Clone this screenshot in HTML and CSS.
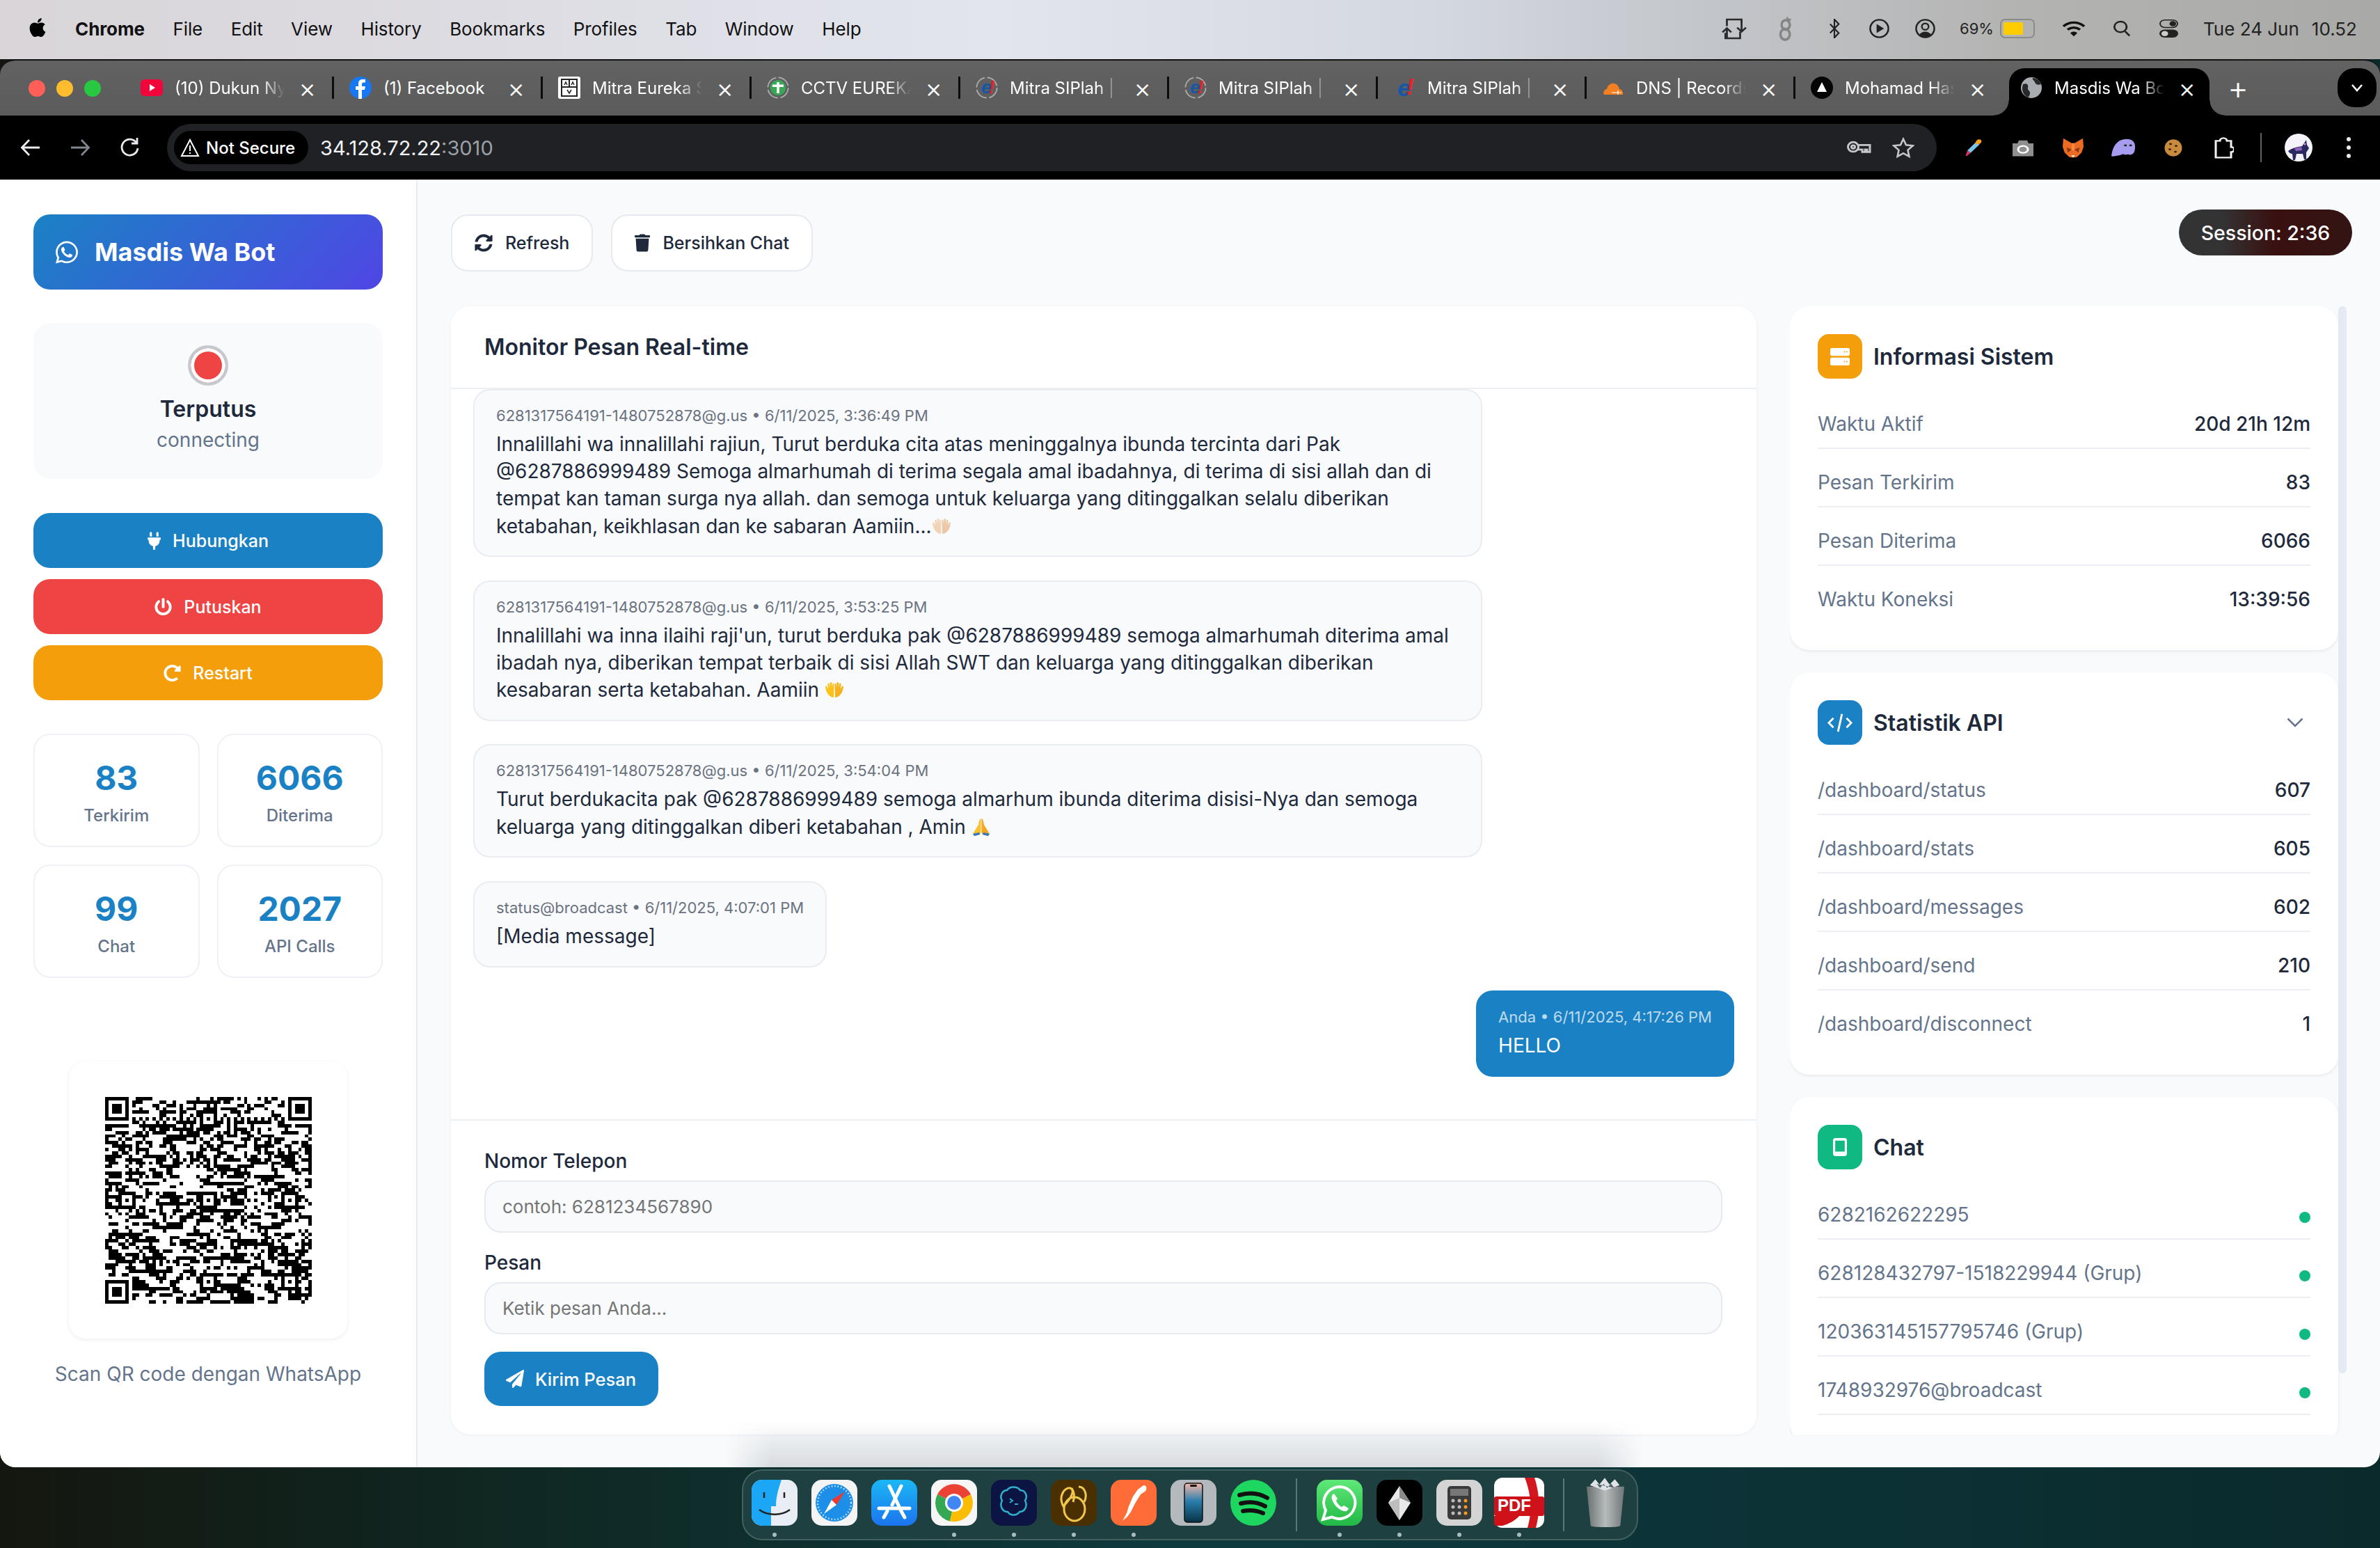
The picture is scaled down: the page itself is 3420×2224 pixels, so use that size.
FILE: index.html
```html
<!DOCTYPE html>
<html lang="id">
<head>
<meta charset="utf-8">
<title>Masdis Wa Bot</title>
<link rel="stylesheet" href="styles.css">
</head>
<body>
<div class="screen">
  <header class="menubar">
    <svg class="apple" viewBox="0 0 384 512"><path d="M318.7 268.7c-.2-36.7 16.4-64.4 50-84.8-18.8-26.9-47.2-41.7-84.7-44.6-35.5-2.8-74.3 20.7-88.5 20.7-15 0-49.4-19.7-76.4-19.7C63.3 141.2 4 184.8 4 273.5q0 39.3 14.4 81.2c12.8 36.7 59 126.7 107.2 125.2 25.2-.6 43-17.9 75.8-17.9 31.8 0 48.3 17.9 76.4 17.9 48.6-.7 90.4-82.5 102.6-119.3-65.2-30.7-61.7-90-61.7-91.9zm-56.6-164.2c27.3-32.4 24.8-61.9 24-72.5-24.1 1.4-52 16.4-67.9 34.9-17.5 19.8-27.8 44.3-25.6 71.9 26.1 2 49.9-11.4 69.5-34.3z"/></svg>
    <nav class="menus">
      <span class="menu-app">Chrome</span><span>File</span><span>Edit</span><span>View</span><span>History</span><span>Bookmarks</span><span>Profiles</span><span>Tab</span><span>Window</span><span>Help</span>
    </nav>
    <div class="status">
      <svg class="st-ic" width="38" height="33" viewBox="0 0 36 34" preserveAspectRatio="none" fill="none" stroke="#2b2b2b" stroke-width="2.6"><path d="M9 13V3h20v6M27 21v10H7v-8"/><path d="M9 31V17M3 22l6-6 6 6M29 4v16M23 15l6 6 6-6"/></svg>
      <svg class="st-ic" width="22" height="37" viewBox="0 0 26 38" preserveAspectRatio="none" fill="none" stroke="#858585" stroke-width="4"><circle cx="12" cy="27" r="8"/><circle cx="13" cy="13" r="7"/><path d="M15 2l3 4 4-1" stroke-width="3"/></svg>
      <svg class="st-ic" width="16" height="28" viewBox="0 0 18 30" preserveAspectRatio="none" fill="none" stroke="#222" stroke-width="2.4"><path d="M2 8l14 14-7 7V1l7 7L2 22"/></svg>
      <svg class="st-ic" width="29" height="28" viewBox="0 0 30 30" preserveAspectRatio="none"><circle cx="15" cy="15" r="13.5" fill="none" stroke="#222" stroke-width="2.6"/><path d="M11 8l11 7-11 7z" fill="#222"/></svg>
      <svg class="st-ic" width="29" height="28" viewBox="0 0 30 30" preserveAspectRatio="none"><circle cx="15" cy="15" r="13.5" fill="none" stroke="#222" stroke-width="2.6"/><circle cx="15" cy="12" r="5" fill="none" stroke="#222" stroke-width="2.4"/><path d="M6 25c3-7 15-7 18 0l-9 4z" fill="#222"/></svg>
      <div class="battery-cell"><span class="pct">69%</span><span class="battery"><span class="battery-fill"></span></span></div>
      <svg class="st-ic" width="36" height="24" viewBox="0 0 36 30" preserveAspectRatio="none" fill="none" stroke="#111" stroke-width="4"><path d="M3 11c9-9 21-9 30 0M9 17c6-5 12-5 18 0"/><path d="M18 29l-5-6c3-3 7-3 10 0z" fill="#111" stroke="none"/></svg>
      <svg class="st-ic" width="26" height="24" viewBox="0 0 28 30" preserveAspectRatio="none" fill="none" stroke="#222" stroke-width="3"><circle cx="12" cy="12" r="9.5"/><path d="M19 20l7 8"/></svg>
      <svg class="st-ic" width="27" height="26" viewBox="0 0 28 34" preserveAspectRatio="none"><rect x="1" y="1" width="26" height="14" rx="7" fill="none" stroke="#222" stroke-width="2"/><circle cx="20" cy="8" r="5" fill="#222"/><rect x="0" y="19" width="28" height="15" rx="7.5" fill="#222"/><circle cx="8" cy="26.5" r="5" fill="#ccc"/></svg>
      <div class="clock">Tue 24 Jun<span class="clock-time">10.52</span></div>
    </div>
  </header>

  <div class="window">
    <div class="tabstrip">
      <div class="lights"><i class="light red"></i><i class="light amber"></i><i class="light green"></i></div>
      <div class="tab sep">
        <svg class="fav" viewBox="0 0 32 32"><rect y="4" width="32" height="24" rx="6" fill="#f2053b"/><path d="M13 11l8 5-8 5z" fill="#fff"/></svg>
        <span class="tab-title tab-fade">(10) Dukun Ny</span><span class="tab-x">×</span>
      </div>
      <div class="tab sep">
        <svg class="fav" viewBox="0 0 32 32"><circle cx="16" cy="16" r="16" fill="#1877f2"/><path d="M18 32V19h4l1-5h-5v-3c0-2 1-2.500 3-2.500h2V4h-4c-4 0-6 2.500-6 6v4H9v5h4v13z" fill="#fff"/></svg>
        <span class="tab-title">(1) Facebook</span><span class="tab-x">×</span>
      </div>
      <div class="tab sep">
        <svg class="fav" viewBox="0 0 32 32"><rect width="32" height="32" rx="3" fill="#fff"/><rect x="5" y="4" width="22" height="24" fill="none" stroke="#222" stroke-width="2"/><path d="M5 15h22M16 4v11" stroke="#222" stroke-width="2"/><path d="M9 12l2-4 2 4M19 12l2-4 2 4M13 19l3 5 3-5" fill="none" stroke="#222" stroke-width="1.500"/></svg>
        <span class="tab-title tab-fade">Mitra Eureka S</span><span class="tab-x">×</span>
      </div>
      <div class="tab sep">
        <svg class="fav" viewBox="0 0 36 36"><circle cx="18" cy="18" r="16.500" fill="none" stroke="#aaa" stroke-width="2" stroke-dasharray="22 4"/><circle cx="18" cy="18" r="12.500" fill="#3aa757"/><path d="M18 9v18M9 15h18" stroke="#fff" stroke-width="4"/></svg>
        <span class="tab-title tab-fade">CCTV EUREKA</span><span class="tab-x">×</span>
      </div>
      <div class="tab sep">
        <svg class="fav" viewBox="0 0 36 36"><circle cx="18" cy="18" r="16.500" fill="none" stroke="#aaa" stroke-width="2" stroke-dasharray="22 4"/><text x="9" y="27" class="fav-e">e</text><text x="21" y="27" class="fav-i">!</text></svg>
        <span class="tab-title tab-fade">Mitra SIPlah | S</span><span class="tab-x">×</span>
      </div>
      <div class="tab sep">
        <svg class="fav" viewBox="0 0 36 36"><circle cx="18" cy="18" r="16.500" fill="none" stroke="#aaa" stroke-width="2" stroke-dasharray="22 4"/><text x="9" y="27" class="fav-e">e</text><text x="21" y="27" class="fav-i">!</text></svg>
        <span class="tab-title tab-fade">Mitra SIPlah | S</span><span class="tab-x">×</span>
      </div>
      <div class="tab sep">
        <svg class="fav" viewBox="0 0 36 36"><text x="7" y="31" class="fav-e fav-big">e</text><text x="21" y="29" class="fav-i fav-big">!</text></svg>
        <span class="tab-title tab-fade">Mitra SIPlah | S</span><span class="tab-x">×</span>
      </div>
      <div class="tab sep">
        <svg class="fav" viewBox="0 0 32 32"><path d="M3 26c-2-4 1-8 4-8 1-6 6-9 11-8 4 1 6 4 7 8 3 0 6 4 5 8z" fill="#f38020"/><path d="M14 23h14M23 20v6" stroke="#fff" stroke-width="1.200"/></svg>
        <span class="tab-title tab-fade">DNS | Records</span><span class="tab-x">×</span>
      </div>
      <div class="tab">
        <svg class="fav" viewBox="0 0 32 32"><circle cx="16" cy="16" r="16" fill="#050505"/><path d="M16 8l7 14H9z" fill="#fff"/></svg>
        <span class="tab-title tab-fade">Mohamad Has</span><span class="tab-x">×</span>
      </div>
      <div class="tab tab-active">
        <svg class="fav" viewBox="0 0 32 32"><circle cx="16" cy="16" r="15" fill="#a9adb2"/><path d="M4 11c6-2 8 1 7 5s4 4 3 9c-1 3-2 4-3 5C5 27 1 20 4 11zM18 2c6 0 10 4 12 9-5 2-8 0-9-3s-4-3-3-6z" fill="#26282b"/></svg>
        <span class="tab-title tab-fade">Masdis Wa Bo</span><span class="tab-x">×</span>
      </div>
      <span class="newtab">+</span>
      <span class="tabmenu"><svg width="20" height="12" viewBox="0 0 20 12" fill="none" stroke="#fff" stroke-width="2.600"><path d="M3 2l7 8 7-8"/></svg></span>
    </div>

    <div class="toolbar">
      <span class="tool-btn"><svg width="30" height="26" viewBox="0 0 30 26" fill="none" stroke="#e8eaed" stroke-width="2.800"><path d="M28 13H3M13 2L2.500 13 13 24"/></svg></span>
      <span class="tool-btn"><svg width="30" height="26" viewBox="0 0 30 26" fill="none" stroke="#80868b" stroke-width="2.800"><path d="M2 13h25M17 2l10.500 11L17 24"/></svg></span>
      <span class="tool-btn"><svg width="28" height="30" viewBox="0 0 28 30" fill="none" stroke="#e8eaed" stroke-width="2.800"><path d="M24 8a11.500 11.500 0 1 0 2 8"/><path d="M25 1v8h-8" /></svg></span>
      <div class="omnibox">
        <span class="chip">
          <svg width="28" height="28" viewBox="0 0 28 28" fill="none" stroke="#fff" stroke-width="2"><path d="M14 3L2 26h24z"/><path d="M14 11v8M14 21v2"/></svg>
          Not Secure
        </span>
        <span class="url">34.128.72.22<span class="url-port">:3010</span></span>
        <span class="omni-end">
          <span class="omni-btn"><svg width="36" height="22" viewBox="0 0 36 24" preserveAspectRatio="none" fill="none" stroke="#c4c7ca" stroke-width="3"><circle cx="10" cy="11" r="7.500"/><circle cx="10" cy="11" r="2.500"/><path d="M17 8h17v11h-4v-4h-3v4h-4v-4h-6"/></svg></span>
          <span class="omni-btn"><svg width="32" height="31" viewBox="0 0 34 34" preserveAspectRatio="none" fill="none" stroke="#c4c7ca" stroke-width="2.800"><path d="M17 3l4.300 9.300 10.200 1.200-7.600 6.900 2 10.100L17 25.400 8.100 30.500l2-10.100-7.600-6.900 10.200-1.200z"/></svg></span>
        </span>
      </div>
      <div class="exts">
        <span class="ext"><svg width="26" height="26" viewBox="0 0 30 40" preserveAspectRatio="none"><path d="M6 26L20 8l6 5L11 32z" fill="#7cc4e8"/><path d="M6 26l5 6-6 7-2-1z" fill="#e02d6b"/><path d="M20 12c-2-4 1-8 4-10 4-1 6 2 5 6-1 3-4 6-9 4z" fill="#f5a11c"/></svg></span>
        <span class="ext"><svg width="30" height="27" viewBox="0 0 30 38" preserveAspectRatio="none"><path d="M0 10h7l2-6h12l2 6h7v26H0z" fill="#8f8f8f"/><circle cx="15" cy="22" r="7" fill="none" stroke="#fff" stroke-width="3"/></svg></span>
        <span class="ext"><svg width="30" height="29" viewBox="0 0 32 38" preserveAspectRatio="none"><path d="M1 1l13 9h4l13-9 1 16-3 11-7 8-3 1h-6l-3-1-7-8L0 17z" fill="#ec6a22"/><path d="M6 18l8 4-6 6zM26 18l-8 4 6 6z" fill="#8a3a14"/><path d="M13 33h6l-3 4z" fill="#fff"/><path d="M14 10h4v14h-4z" fill="#f98a45"/></svg></span>
        <span class="ext"><svg width="34" height="27" viewBox="0 0 32 38" preserveAspectRatio="none"><path d="M0 36C1 22 5 2 20 1c9 0 12 7 12 15 0 10-1 16-7 17-2-2-4-1-6 0-2-2-4-2-6 0-3 1-8 3-13 3z" fill="#a79df0"/><circle cx="19" cy="14" r="2" fill="#222"/><circle cx="26" cy="14" r="2" fill="#222"/></svg></span>
        <span class="ext"><svg width="26" height="25" viewBox="0 0 26 36" preserveAspectRatio="none"><ellipse cx="13" cy="18" rx="12.500" ry="17.500" fill="#c88a3c"/><circle cx="9" cy="10" r="2" fill="#3a2208"/><circle cx="17" cy="14" r="2" fill="#3a2208"/><circle cx="8" cy="21" r="2" fill="#3a2208"/><circle cx="16" cy="26" r="2" fill="#3a2208"/></svg></span>
        <span class="ext"><svg width="30" height="32" viewBox="0 0 30 40" preserveAspectRatio="none" fill="none" stroke="#f1f3f4" stroke-width="3"><path d="M4 8h6a5 5 0 0 1 10 0h6v11a4 4 0 0 1 0 9v10H4z"/></svg></span>
        <span class="ext-sep"></span>
        <span class="avatar"><svg width="40" height="40" viewBox="0 0 40 40"><circle cx="20" cy="20" r="20" fill="#f4f3fa"/><path d="M5 25c6-5 14-6 20-7l6-9 1 7 3 5-4 6v10h-3l-2-8h-9l-2 9H12l-1-9c-2 0-4-1-6-4z" fill="#2a2860"/><circle cx="29" cy="15" r="1.500" fill="#d78be0"/><path d="M14 21l10-2 1 5-9 1z" fill="#8c63b8"/></svg></span>
        <span class="kebab"><i></i><i></i><i></i></span>
      </div>
    </div>

    <div class="app">
      <aside class="sidebar">
        <div class="brand">
          <svg class="brand-ic" viewBox="0 0 448 512"><path d="M380.900 97.100C339 55.100 283.200 32 223.900 32c-122.400 0-222 99.600-222 222 0 39.100 10.200 77.300 29.600 111L0 480l117.700-30.900c32.400 17.700 68.900 27 106.100 27h.1c122.300 0 224.100-99.600 224.100-222 0-59.300-25.200-115-67.100-157zm-157 341.600c-33.200 0-65.700-8.900-94-25.700l-6.700-4-69.800 18.300L72 359.200l-4.400-7c-18.500-29.400-28.200-63.300-28.200-98.200 0-101.700 82.800-184.500 184.600-184.500 49.300 0 95.600 19.200 130.400 54.100 34.800 34.900 56.200 81.200 56.100 130.500 0 101.800-84.900 184.600-186.600 184.600zm101.200-138.200c-5.500-2.800-32.800-16.200-37.900-18-5.100-1.900-8.800-2.800-12.500 2.800-3.700 5.600-14.300 18-17.600 21.800-3.200 3.700-6.500 4.200-12 1.400-32.600-16.300-54-29.100-75.500-66-5.700-9.800 5.700-9.100 16.300-30.300 1.800-3.700.9-6.900-.5-9.700-1.400-2.800-12.500-30.100-17.100-41.200-4.500-10.800-9.100-9.300-12.500-9.500-3.200-.2-6.900-.2-10.600-.2-3.700 0-9.700 1.400-14.800 6.900-5.100 5.600-19.400 19-19.400 46.300 0 27.300 19.900 53.700 22.600 57.400 2.800 3.700 39.100 59.700 94.800 83.800 35.200 15.200 49 16.500 66.600 13.900 10.700-1.600 32.800-13.400 37.400-26.400 4.600-13 4.600-24.100 3.200-26.400-1.300-2.500-5-3.900-10.500-6.600z"/></svg>
          <span>Masdis Wa Bot</span>
        </div>
        <div class="status-box">
          <span class="status-dot"></span>
          <div class="status-title">Terputus</div>
          <div class="status-sub">connecting</div>
        </div>
        <div class="actions">
          <button class="act act-blue"><svg class="act-ic" viewBox="0 0 384 512"><path d="M320 32a32 32 0 0 0-64 0v96h64Zm48 128H16A16 16 0 0 0 0 176v32a16 16 0 0 0 16 16H32v32A160.070 160.070 0 0 0 160 412.800V512h64V412.800A160.070 160.070 0 0 0 352 256V224h16a16 16 0 0 0 16-16V176A16 16 0 0 0 368 160ZM128 32a32 32 0 0 0-64 0v96h64Z"/></svg>Hubungkan</button>
          <button class="act act-red"><svg class="act-ic act-ic-w" viewBox="0 0 512 512"><path d="M400 54.100c63 45 104 118.600 104 201.900 0 136.800-110.800 247.700-247.500 248C120 504.300 8.200 393 8 256.400 7.900 173.100 48.900 99.300 111.800 54.200c11.700-8.300 28-4.800 35 7.700L162.600 90c5.900 10.500 3.100 23.800-6.600 31-41.500 30.800-68 79.600-68 134.900-.1 92.300 74.500 168.100 168 168.100 91.600 0 168.600-74.200 168-169.100-.3-51.800-24.700-101.800-68.100-134-9.700-7.200-12.400-20.500-6.500-30.900l15.800-28.100c7-12.400 23.200-16.100 34.800-7.900zM296 264V24c0-13.300-10.700-24-24-24h-32c-13.300 0-24 10.700-24 24v240c0 13.300 10.700 24 24 24h32c13.300 0 24-10.700 24-24z"/></svg>Putuskan</button>
          <button class="act act-amber"><svg class="act-ic act-ic-w" viewBox="0 0 512 512"><path d="M256.455 8c66.269.119 126.437 26.233 170.859 68.685l35.715-35.715C478.149 25.851 504 36.559 504 57.941V192c0 13.255-10.745 24-24 24H345.941c-21.382 0-32.090-25.851-16.971-40.971l41.750-41.750c-30.864-28.899-70.801-44.907-113.230-45.273-92.398-.798-170.283 73.977-169.484 169.442C88.764 348.009 162.184 424 256 424c41.127 0 79.997-14.678 110.629-41.556 4.743-4.161 11.906-3.908 16.368.553l39.662 39.662c4.872 4.872 4.631 12.815-.482 17.433C378.202 479.813 319.926 504 256 504 119.034 504 8.001 392.967 8 256.002 7.999 119.193 119.646 7.755 256.455 8z"/></svg>Restart</button>
        </div>
        <div class="stats">
          <div class="stat"><div class="stat-num">83</div><div class="stat-lbl">Terkirim</div></div>
          <div class="stat"><div class="stat-num">6066</div><div class="stat-lbl">Diterima</div></div>
          <div class="stat"><div class="stat-num">99</div><div class="stat-lbl">Chat</div></div>
          <div class="stat"><div class="stat-num">2027</div><div class="stat-lbl">API Calls</div></div>
        </div>
        <div class="qr-card"><svg id="qr" class="qr" viewBox="0 0 61 61" shape-rendering="crispEdges"></svg></div>
        <div class="qr-text">Scan QR code dengan WhatsApp</div>
      </aside>

      <main class="content">
        <div class="topbar">
          <button class="ghost"><svg class="ghost-ic" viewBox="0 0 512 512"><path d="M370.720 133.280C339.458 104.008 298.888 87.962 255.848 88c-77.458.068-144.328 53.178-162.791 126.850-1.344 5.363-6.122 9.150-11.651 9.150H24.103c-7.498 0-13.194-6.807-11.807-14.176C33.933 94.924 134.813 8 256 8c66.448 0 126.791 26.136 171.315 68.685L463.030 40.970C478.149 25.851 504 36.559 504 57.941V192c0 13.255-10.745 24-24 24H345.941c-21.382 0-32.090-25.851-16.971-40.971l41.750-41.749zM32 296h134.059c21.382 0 32.090 25.851 16.971 40.971l-41.750 41.750c31.262 29.273 71.835 45.319 114.876 45.280 77.418-.07 144.315-53.144 162.787-126.849 1.344-5.363 6.122-9.150 11.651-9.150h57.304c7.498 0 13.194 6.807 11.807 14.176C478.067 417.076 377.187 504 256 504c-66.448 0-126.791-26.136-171.315-68.685L48.970 471.030C33.851 486.149 8 475.441 8 454.059V320c0-13.255 10.745-24 24-24z"/></svg>Refresh</button>
          <button class="ghost"><svg class="ghost-ic ghost-trash" viewBox="0 0 448 512"><path d="M432 32H312l-9.400-18.700A24 24 0 0 0 281.100 0H166.800a23.720 23.720 0 0 0-21.400 13.300L136 32H16A16 16 0 0 0 0 48v32a16 16 0 0 0 16 16h416a16 16 0 0 0 16-16V48a16 16 0 0 0-16-16zM53.200 467a48 48 0 0 0 47.900 45h245.800a48 48 0 0 0 47.900-45L416 128H32z"/></svg>Bersihkan Chat</button>
        </div>
        <div class="session">Session: 2:36</div>
        <div class="columns">
          <section class="monitor">
            <h2 class="monitor-title">Monitor Pesan Real-time</h2>
            <div class="messages">
              <article class="msg">
                <div class="meta">6281317564191-1480752878@g.us • 6/11/2025, 3:36:49 PM</div>
                <div class="body">Innalillahi wa innalillahi rajiun, Turut berduka cita atas meninggalnya ibunda tercinta dari Pak @6287886999489 Semoga almarhumah di terima segala amal ibadahnya, di terima di sisi allah dan di tempat kan taman surga nya allah. dan semoga untuk keluarga yang ditinggalkan selalu diberikan ketabahan, keikhlasan dan ke sabaran Aamiin...<svg class="emoji" viewBox="0 0 28 28"><path d="M13 25C8 25 3 20 2 14L1 10c0-2 2-2 2.500 0L5 13 4.500 6c0-2 2.500-2 2.500 0L8 11 8 4.500c0-2 2.500-2 2.500 0L11 11l.5-5c.3-1.800 2-1.500 2 .5z" fill="#f2d3b6"/><path transform="matrix(-1 0 0 1 28 0)" d="M13 25C8 25 3 20 2 14L1 10c0-2 2-2 2.500 0L5 13 4.500 6c0-2 2.500-2 2.500 0L8 11 8 4.500c0-2 2.500-2 2.500 0L11 11l.5-5c.3-1.800 2-1.500 2 .5z" fill="#ecc8a8"/></svg></div>
              </article>
              <article class="msg">
                <div class="meta">6281317564191-1480752878@g.us • 6/11/2025, 3:53:25 PM</div>
                <div class="body">Innalillahi wa inna ilaihi raji'un, turut berduka pak @6287886999489 semoga almarhumah diterima amal ibadah nya, diberikan tempat terbaik di sisi Allah SWT dan keluarga yang ditinggalkan diberikan kesabaran serta ketabahan. Aamiin <svg class="emoji" viewBox="0 0 28 28"><path d="M13 25C8 25 3 20 2 14L1 10c0-2 2-2 2.500 0L5 13 4.500 6c0-2 2.500-2 2.500 0L8 11 8 4.500c0-2 2.500-2 2.500 0L11 11l.5-5c.3-1.800 2-1.500 2 .5z" fill="#fcc21b"/><path transform="matrix(-1 0 0 1 28 0)" d="M13 25C8 25 3 20 2 14L1 10c0-2 2-2 2.500 0L5 13 4.500 6c0-2 2.500-2 2.500 0L8 11 8 4.500c0-2 2.500-2 2.500 0L11 11l.5-5c.3-1.800 2-1.500 2 .5z" fill="#f5b31e"/></svg></div>
              </article>
              <article class="msg">
                <div class="meta">6281317564191-1480752878@g.us • 6/11/2025, 3:54:04 PM</div>
                <div class="body">Turut berdukacita pak @6287886999489 semoga almarhum ibunda diterima disisi-Nya dan semoga keluarga yang ditinggalkan diberi ketabahan , Amin <svg class="emoji" viewBox="0 0 28 28"><path d="M13.500 2c-2 0-2.500 4-3.500 9l-5 8-3 5 2 3 8-2 1.500-3z" fill="#fbc02d"/><path d="M14.500 2c2 0 2.500 4 3.500 9l5 8 3 5-2 3-8-2-1.500-3z" fill="#f5a623"/><path d="M2 24l2 3 8-2-1-3zM26 24l-2 3-8-2 1-3z" fill="#2c78c6"/></svg></div>
              </article>
              <article class="msg">
                <div class="meta">status@broadcast • 6/11/2025, 4:07:01 PM</div>
                <div class="body">[Media message]</div>
              </article>
              <article class="msg msg-out">
                <div class="meta">Anda • 6/11/2025, 4:17:26 PM</div>
                <div class="body">HELLO</div>
              </article>
            </div>
            <form class="composer">
              <label class="field-label" for="phone">Nomor Telepon</label>
              <input class="field" id="phone" placeholder="contoh: 6281234567890">
              <label class="field-label" for="text">Pesan</label>
              <input class="field" id="text" placeholder="Ketik pesan Anda...">
              <button class="send" type="button"><svg class="send-ic" viewBox="0 0 512 512"><path d="M476 3.200L12.500 270.600c-18.100 10.400-15.800 35.600 2.200 43.200L121 358.400l287.300-253.200c5.500-4.900 13.300 2.600 8.600 8.300L176 407v80.500c0 23.600 28.500 32.900 42.500 15.800L282 426l124.600 52.200c14.200 6 30.400-2.900 33-18.200l72-432C515 7.800 493.300-6.800 476 3.200z"/></svg>Kirim Pesan</button>
            </form>
          </section>

          <section class="panel">
            <div class="info">
              <div class="info-head"><span class="info-ic ic-amber"><svg width="28" height="25" viewBox="0 0 34 28" preserveAspectRatio="none"><rect width="34" height="12.500" rx="3" fill="#fff"/><rect y="15.500" width="34" height="12.500" rx="3" fill="#fff"/><path d="M24 5h2v2h-2zM28 5h2v2h-2zM24 21h2v2h-2zM28 21h2v2h-2z" fill="#f59e0b"/></svg></span><h3>Informasi Sistem</h3></div>
              <div class="row"><span>Waktu Aktif</span><b>20d 21h 12m</b></div>
              <div class="row"><span>Pesan Terkirim</span><b>83</b></div>
              <div class="row"><span>Pesan Diterima</span><b>6066</b></div>
              <div class="row row-last"><span>Waktu Koneksi</span><b>13:39:56</b></div>
            </div>
            <div class="info">
              <div class="info-head"><span class="info-ic ic-blue"><svg width="36" height="29" viewBox="0 0 38 30" preserveAspectRatio="none" fill="none" stroke="#fff" stroke-width="3"><path d="M9 8l-7 7 7 7M29 8l7 7-7 7M22 2l-6 26"/></svg></span><h3>Statistik API</h3><svg class="chev" width="24" height="14" viewBox="0 0 24 14" fill="none" stroke="#64748b" stroke-width="2.500"><path d="M1.500 1.500L12 12 22.500 1.500"/></svg></div>
              <div class="row"><span>/dashboard/status</span><b>607</b></div>
              <div class="row"><span>/dashboard/stats</span><b>605</b></div>
              <div class="row"><span>/dashboard/messages</span><b>602</b></div>
              <div class="row"><span>/dashboard/send</span><b>210</b></div>
              <div class="row row-last"><span>/dashboard/disconnect</span><b>1</b></div>
            </div>
            <div class="info">
              <div class="info-head"><span class="info-ic ic-green"><svg width="20" height="26" viewBox="0 0 22 28" preserveAspectRatio="none"><path fill-rule="evenodd" d="M4 0h14a4 4 0 0 1 4 4v20a4 4 0 0 1-4 4H4a4 4 0 0 1-4-4V4a4 4 0 0 1 4-4zM3.500 4v17h15V4z" fill="#fff"/></svg></span><h3>Chat</h3></div>
              <div class="row"><span>6282162622295</span><i class="online"></i></div>
              <div class="row"><span>628128432797-1518229944 (Grup)</span><i class="online"></i></div>
              <div class="row"><span>120363145157795746 (Grup)</span><i class="online"></i></div>
              <div class="row"><span>1748932976@broadcast</span><i class="online"></i></div>
            </div>
            <span class="scroll-thumb"></span>
          </section>
        </div>
        <div class="dock-shadow"></div>
      </main>
    </div>
  </div>

  <footer class="desk">
    <div class="dock">
      <span class="dock-item run"><svg viewBox="0 0 66 66"><rect width="66" height="66" rx="15" fill="#e8eef4"/><path d="M15 0h28c-5 14-8 26-8 38h-7v28H15A15 15 0 0 1 0 51V15A15 15 0 0 1 15 0z" fill="#1ba6f6"/><path d="M18 18v8M47 18v8" stroke="#222" stroke-width="2.500"/><path d="M11 43c12 9 32 9 44 0" fill="none" stroke="#222" stroke-width="2.500"/></svg></span>
      <span class="dock-item"><svg viewBox="0 0 66 66"><rect width="66" height="66" rx="15" fill="#f4f4f4"/><circle cx="33" cy="33" r="27" fill="#1d8fe8"/><circle cx="33" cy="33" r="24" fill="none" stroke="#cfe8fb" stroke-width="2.500" stroke-dasharray="1.500 3"/><path d="M48 17L29 29l7 7z" fill="#f2372d"/><path d="M18 49l11-20 7 7z" fill="#fff"/></svg></span>
      <span class="dock-item"><svg viewBox="0 0 66 66"><defs><linearGradient id="g1" x1="0" y1="0" x2="0" y2="1"><stop offset="0" stop-color="#1bb7f5"/><stop offset="1" stop-color="#1c74ee"/></linearGradient></defs><rect width="66" height="66" rx="15" fill="url(#g1)"/><path d="M26 9l17 36M43 9L30 36M23 45l-5 9M43 45l5 9" stroke="#fff" stroke-width="5" stroke-linecap="round" fill="none"/><path d="M11 41h44" stroke="#fff" stroke-width="5" stroke-linecap="round"/></svg></span>
      <span class="dock-item run"><svg viewBox="0 0 66 66"><rect width="66" height="66" rx="15" fill="#f6f6f6"/><path d="M33 33L9 21A27 27 0 0 1 57 21z" fill="#ea4335"/><path d="M33 33L9 21A27 27 0 0 0 27 59.500z" fill="#34a853"/><path d="M33 33L57 21A27 27 0 0 1 27 59.500z" fill="#fbbc05"/><circle cx="33" cy="33" r="13" fill="#fff"/><circle cx="33" cy="33" r="10" fill="#4285f4"/></svg></span>
      <span class="dock-item run"><svg viewBox="0 0 66 66"><rect width="66" height="66" rx="15" fill="#0b1442"/><path d="M23 15c4-6 15-6 19 0 8 0 11 9 7 15 4 7 0 16-8 16-4 6-13 6-17 0-8 0-12-9-8-16-4-6 0-15 7-15z" fill="none" stroke="#2fb0c9" stroke-width="2.500"/><path d="M27 27l4 3-4 3M34 35h5" fill="none" stroke="#2fb0c9" stroke-width="2"/></svg></span>
      <span class="dock-item run"><svg viewBox="0 0 66 66"><rect width="66" height="66" rx="15" fill="#4a3000"/><path d="M18 38c-8-14 2-28 10-26 6 2 4 12-10 26zM40 10c9 0 13 12 8 22" fill="none" stroke="#f2c84a" stroke-width="3"/><ellipse cx="34" cy="42" rx="15" ry="17" fill="none" stroke="#f2c84a" stroke-width="3"/><path d="M30 12c4 6 4 14 2 20" fill="none" stroke="#f2c84a" stroke-width="3"/></svg></span>
      <span class="dock-item run"><svg viewBox="0 0 66 66"><rect width="66" height="66" rx="15" fill="#ff6c37"/><path d="M47 8c5-1 6 6 2 9l-6 4-8 13-6 12-5 7-7 6 6-11 3-10 6-14 7-10z" fill="#fff"/></svg></span>
      <span class="dock-item"><svg viewBox="0 0 66 66"><defs><linearGradient id="g2" x1="0" y1="0" x2="0" y2="1"><stop offset="0" stop-color="#f8b8a8"/><stop offset=".45" stop-color="#2b7fae"/><stop offset="1" stop-color="#063245"/></linearGradient></defs><rect width="66" height="66" rx="15" fill="#b3b9bc"/><rect x="20" y="5" width="26" height="56" rx="4" fill="url(#g2)" stroke="#111" stroke-width="1.500"/><rect x="28" y="7" width="10" height="3" rx="1.500" fill="#111"/></svg></span>
      <span class="dock-item"><svg viewBox="0 0 66 66"><circle cx="33" cy="33" r="33" fill="#1ed760"/><path d="M13 22c14-4 28-3 40 4M15 34c12-3 24-2 35 4M18 45c10-2 20-1 29 3" fill="none" stroke="#111" stroke-width="6" stroke-linecap="round"/></svg></span>
      <span class="dock-sep"></span>
      <span class="dock-item run"><svg viewBox="0 0 66 66"><defs><linearGradient id="g3" x1="0" y1="0" x2="0" y2="1"><stop offset="0" stop-color="#5fe878"/><stop offset="1" stop-color="#21b845"/></linearGradient></defs><rect width="66" height="66" rx="15" fill="url(#g3)"/><path d="M33 10a23 23 0 0 0-20 34l-4 13 13-3.500A23 23 0 1 0 33 10z" fill="none" stroke="#fff" stroke-width="4"/><path d="M25 20c-3 1-4 4-3 8 2 7 9 15 17 17 4 1 6-1 7-4l-7-4-3 2c-3-1-7-6-8-9l2-3z" fill="#fff"/></svg></span>
      <span class="dock-item run"><svg viewBox="0 0 66 66"><rect width="66" height="66" rx="15" fill="#000"/><path d="M33 9l16 24-16 25-16-25z" fill="#e9e9e9"/><path d="M33 9l16 24-16-7z" fill="#8a8a8a"/><path d="M17 33l16-7v32z" fill="#bdbdbd"/></svg></span>
      <span class="dock-item run"><svg viewBox="0 0 66 66"><rect width="66" height="66" rx="15" fill="#d4d4d4"/><rect x="16" y="9" width="34" height="48" rx="5" fill="#3a3a3a"/><rect x="20" y="13" width="26" height="10" fill="#777"/><g fill="#bbb"><circle cx="24" cy="30" r="2.500"/><circle cx="33" cy="30" r="2.500"/><circle cx="24" cy="39" r="2.500"/><circle cx="33" cy="39" r="2.500"/><circle cx="24" cy="48" r="2.500"/><circle cx="33" cy="48" r="2.500"/></g><g fill="#f39c1f"><circle cx="42" cy="30" r="2.500"/><circle cx="42" cy="39" r="2.500"/><circle cx="42" cy="48" r="2.500"/></g></svg></span>
      <span class="dock-item run"><svg class="dock-pdf" viewBox="0 0 72 72"><rect width="72" height="72" rx="12" fill="#fff"/><path d="M44 0h14c6 18 10 44 2 72H48c8-26 4-52-4-72z" fill="#d3171e"/><rect y="27" width="72" height="28" rx="3" fill="#cf1219"/><path d="M0 55h36c-5 6-14 11-24 14H4a4 4 0 0 1-4-4z" fill="#cf1219"/><text x="5" y="48" class="pdf-text">PDF</text></svg></span>
      <span class="dock-sep dock-sep-2"></span>
      <span class="dock-item dock-trash"><svg viewBox="0 0 62 76"><defs><linearGradient id="g4" x1="0" y1="0" x2="1" y2="0"><stop offset="0" stop-color="#6a6f70"/><stop offset=".5" stop-color="#b6bbbb"/><stop offset="1" stop-color="#70757a"/></linearGradient></defs><path d="M3 14h56l-6 58c-1 3-43 3-44 0z" fill="url(#g4)"/><path d="M8 12l8-9 6 8 8-10 7 10 8-8 7 9-22 8z" fill="#dfe3e6"/><path d="M18 10l5 6 5-6 6 6 5-7 5 7z" fill="#56606a"/></svg></span>
    </div>
  </footer>
</div>
<script src="qr.js"></script>
</body>
</html>
```

FILE: styles.css
```css
* { box-sizing: border-box; }
html, body { margin: 0; padding: 0; }
body { width: 3420px; height: 2224px; overflow: hidden; font-family: "Inter", "Liberation Sans", sans-serif; color: #1e293b; }
button, input { font-family: inherit; }
svg { display: block; }

.screen { width: 3420px; height: 2224px; display: flex; flex-direction: column; background: linear-gradient(90deg, #14170f 0%, #0f2a26 25%, #0e3a3e 50%, #0c3236 75%, #0b2a2c 100%); }

/* macOS menu bar */
.menubar { height: 85px; flex: none; display: flex; align-items: center; padding: 0 0 3px 41px; background: linear-gradient(90deg, #d9d5d9 0%, #dddce2 20%, #e2e5ee 42%, #d4d8e0 60%, #c2c5ca 72%, #b3b3b1 85%, #a9a9a7 100%); color: #111; font-size: 26px; }
.apple { width: 26px; height: 31px; fill: #000; margin-top: -4px; }
.menus { display: flex; gap: 40.5px; margin-left: 41px; letter-spacing: -.1px; }
.menu-app { font-weight: 700; }
.status { margin-left: auto; width: 964px; display: grid; grid-template-columns: 70px 80px 59px 70px 62px 147px 72px 66px 68px 270px; align-items: center; justify-items: center; }
.pct { font-size: 22px; color: #222; }
.battery-cell { justify-self: start; padding-left: 19px; display: flex; align-items: center; gap: 9px; }
.battery { width: 50px; height: 28px; border: 2px solid #8b8b8b; border-radius: 7px; padding: 3px; display: block; }
.battery-fill { display: block; width: 28px; height: 100%; background: #ffcc00; border-radius: 2px; }
.clock { justify-self: start; padding-left: 16px; color: #222; white-space: nowrap; }
.clock-time { margin-left: 18px; }

/* browser window */
.window { height: 2023px; flex: none; border-radius: 22px; overflow: hidden; background: #000; display: flex; flex-direction: column; border-top: 2px solid #111; }
.tabstrip { height: 79px; flex: none; display: flex; padding-left: 40px; padding-top: 11px; background: linear-gradient(180deg, #626262, #5b5b5b); }
.lights { width: 140px; display: flex; gap: 16px; padding-left: 1px; padding-top: 17px; }
.light { width: 24px; height: 24px; border-radius: 50%; display: block; }
.red { background: #ff5f57; } .amber { background: #febc2e; } .green { background: #28c840; }
.tab { width: 300px; height: 68px; flex: none; display: flex; align-items: center; padding: 0 26px 12px 22px; color: #fff; font-size: 24px; position: relative; }
.sep::after { content: ""; position: absolute; right: 0; top: 12px; width: 3px; height: 32px; background: #0c0c0c; }
.fav { width: 32px; height: 32px; flex: none; }
.tab-title { margin-left: 17px; width: 158px; white-space: nowrap; flex: none; }
.tab-fade { -webkit-mask-image: linear-gradient(90deg, #000 79%, transparent 100%); mask-image: linear-gradient(90deg, #000 79%, transparent 100%); }
.tab-x { margin-left: auto; font-size: 38px; line-height: 30px; font-weight: 300; }
.fav-e { font: italic 700 30px "Liberation Sans", sans-serif; fill: #1456a8; }
.fav-i { font: italic 700 30px "Liberation Sans", sans-serif; fill: #e8202a; }
.fav-big { font-size: 38px; }
.tab-active { background: #000; border-radius: 22px 22px 0 0; width: 288px; margin-left: 7px; margin-right: 6px; padding-left: 16px; padding-right: 20px; }
.tab-active::before, .tab-active::after { content: ""; position: absolute; bottom: 0; width: 22px; height: 22px; }
.tab-active::before { left: -22px; background: radial-gradient(circle at 0 0, transparent 21px, #000 22px); }
.tab-active::after { right: -22px; background: radial-gradient(circle at 100% 0, transparent 21px, #000 22px); }
.newtab { color: #fff; font-size: 46px; line-height: 56px; font-weight: 300; margin-left: 20px; width: 30px; text-align: center; }
.tabmenu { width: 56px; height: 56px; border-radius: 24px; background: #000; margin-left: 128px; display: flex; align-items: center; justify-content: center; }

.toolbar { height: 92px; flex: none; display: flex; align-items: center; background: #000; padding-left: 22px; }
.tool-btn { width: 44px; margin-right: 27px; display: flex; justify-content: center; flex: none; }
.omnibox { margin-left: 5px; width: 2543px; height: 68px; border-radius: 34px; background: #202124; display: flex; align-items: center; padding-left: 10px; flex: none; }
.chip { height: 48px; width: 193px; border-radius: 24px; background: #000; display: flex; align-items: center; gap: 9px; padding-left: 9px; color: #fff; font-size: 24px; font-weight: 500; white-space: nowrap; }
.url { margin-left: 17px; font-size: 29px; color: #f1f3f4; }
.url-port { color: #9aa0a6; }
.omni-end { margin-left: auto; display: flex; padding-right: 16px; }
.omni-btn { width: 64px; display: flex; justify-content: center; align-items: center; }
.exts { margin-left: 16px; display: flex; align-items: center; }
.ext { width: 72px; display: flex; justify-content: center; align-items: center; }
.ext-sep { width: 2px; height: 42px; background: #5f6368; margin: 0 17px; }
.avatar { width: 72px; display: flex; justify-content: center; }
.kebab { width: 72px; display: flex; flex-direction: column; align-items: center; gap: 6px; }
.kebab i { width: 6px; height: 6px; border-radius: 50%; background: #e8eaed; display: block; }

/* app */
.app { height: 1850px; flex: none; display: flex; background: #f8fafc; }
.sidebar { width: 600px; flex: none; background: #fff; border-right: 2px solid #e9edf2; padding: 50px 48px 0; display: flex; flex-direction: column; }
.brand { height: 108px; flex: none; border-radius: 24px; background: linear-gradient(135deg, #1a82c4, #4f46e5); color: #fff; display: flex; align-items: center; gap: 24px; padding-left: 32px; font-size: 36px; font-weight: 700; }
.brand-ic { width: 32px; height: 37px; fill: #fff; }
.status-box { margin-top: 48px; height: 224px; flex: none; border-radius: 24px; background: #f8fafc; display: flex; flex-direction: column; align-items: center; padding-top: 32px; }
.status-dot { width: 58px; height: 58px; border-radius: 50%; background: #ef4444; border: 4px solid #c5c9d0; box-shadow: inset 0 0 0 5px #fff; }
.status-title { margin-top: 12px; font-size: 32px; font-weight: 600; line-height: 44px; color: #1e293b; }
.status-sub { font-size: 28px; line-height: 44px; color: #64748b; }
.actions { margin-top: 49px; display: flex; flex-direction: column; gap: 16px; flex: none; }
.act { height: 79px; border: 0; border-radius: 24px; color: #fff; font-size: 25px; font-weight: 500; display: flex; align-items: center; justify-content: center; gap: 17px; }
.act-ic { width: 19px; height: 26px; fill: #fff; }
.act-ic-w { width: 25px; }
.act-blue { background: #1a82c4; } .act-red { background: #ef4444; } .act-amber { background: #f59e0b; }
.stats { margin-top: 48px; display: grid; grid-template-columns: 1fr 1fr; gap: 25px; flex: none; }
.stat { height: 163px; border: 2px solid #eef1f5; border-radius: 24px; background: #fff; text-align: center; padding-top: 33px; }
.stat-num { font-size: 48px; font-weight: 700; line-height: 58px; color: #1a82c4; }
.stat-lbl { margin-top: 10px; font-size: 24px; line-height: 30px; color: #64748b; font-weight: 500; }
.qr-card { margin: 120px auto 0; width: 400px; height: 398px; flex: none; border-radius: 24px; background: #fff; box-shadow: 0 2px 6px rgba(15,23,42,.07); display: flex; align-items: center; justify-content: center; }
.qr { width: 297px; height: 297px; }
.qr-text { margin-top: 33px; text-align: center; font-size: 28px; line-height: 36px; color: #64748b; white-space: nowrap; }

.content { flex: 1; position: relative; padding: 50px 48px 47px 48px; display: flex; flex-direction: column; min-width: 0; }
.topbar { height: 82px; flex: none; display: flex; gap: 26px; }
.ghost { height: 82px; padding: 0 32px 0 32px; border: 2px solid #e6eaf0; border-radius: 24px; background: #fff; color: #1e293b; font-size: 25px; font-weight: 500; display: flex; align-items: center; gap: 18px; }
.ghost-ic { width: 26px; height: 26px; fill: #1e293b; }
.ghost-trash { width: 22px; }
.session { position: absolute; top: 43px; right: 40px; height: 66px; width: 249px; border-radius: 33px; background: linear-gradient(90deg, #333 0%, #333 25%, #3a1010 55%, #331414 100%); color: #fff; font-size: 28.5px; font-weight: 500; display: flex; align-items: center; justify-content: center; }
.columns { margin-top: 50px; flex: 1; min-height: 0; display: flex; gap: 48px; }
.monitor { width: 1876px; flex: none; background: #fff; border-radius: 28px; box-shadow: 0 1px 4px rgba(15,23,42,.05); display: flex; flex-direction: column; overflow: hidden; }
.monitor-title { margin: 0; height: 119px; flex: none; border-bottom: 2px solid #eceff3; padding-left: 48px; font-size: 32px; font-weight: 600; line-height: 117px; color: #1e293b; }
.messages { flex: 1; min-height: 0; padding: 0 32px; display: flex; flex-direction: column; align-items: flex-start; gap: 33.5px; overflow: hidden; }
.msg { max-width: 80%; flex: none; background: #f8fafc; border: 2px solid #e9edf2; border-radius: 24px; padding: 22px 31px 22.5px; }
.meta { font-size: 22px; line-height: 28px; color: #6b7280; margin-bottom: 8px; }
.body { font-size: 28px; line-height: 39.2px; color: #1e293b; }
.emoji { display: inline-block; width: 28px; height: 28px; vertical-align: -4px; }
.msg-out { align-self: flex-end; background: #1a82c4; border-color: #1a82c4; padding-left: 30px; padding-right: 30px; }
.msg-out .meta { color: rgba(255,255,255,.72); }
.msg-out .body { color: #fff; }
.composer { flex: none; border-top: 2px solid #eceff3; padding: 38px 49px 41px 48px; display: flex; flex-direction: column; align-items: flex-start; }
.field-label { font-size: 28px; font-weight: 500; line-height: 40px; margin-bottom: 8px; color: #1e293b; }
.field { width: 100%; height: 75px; border: 2px solid #e6eaf0; border-radius: 24px; background: #f8fafc; padding: 0 24px; font-size: 26px; margin-bottom: 23px; color: #1e293b; }
.field::placeholder { color: #757575; opacity: 1; }
.send { margin-top: 2px; height: 78px; padding: 0 32px 0 31px; border: 0; border-radius: 24px; background: #1a82c4; color: #fff; font-size: 25.5px; font-weight: 500; display: flex; align-items: center; gap: 16px; }
.send-ic { width: 26px; height: 26px; fill: #fff; }
.panel { width: 800px; flex: none; position: relative; display: flex; flex-direction: column; gap: 32px; overflow: hidden; padding-right: 12px; }
.info { flex: none; background: #fff; border-radius: 28px; padding: 40px; box-shadow: 0 2px 4px rgba(15,23,42,.07); }
.info-head { display: flex; align-items: center; gap: 16px; margin-bottom: 17px; height: 64px; }
.info-head h3 { margin: 0; font-size: 32px; font-weight: 600; color: #1e293b; }
.info-ic { width: 64px; height: 64px; border-radius: 16px; display: flex; align-items: center; justify-content: center; flex: none; }
.ic-amber { background: #f59e0b; } .ic-blue { background: #1a82c4; } .ic-green { background: #10b981; }
.chev { margin-left: auto; margin-right: 10px; }
.row { height: 84px; padding: 28px 0 14px; border-bottom: 2px solid #eceff3; display: flex; justify-content: space-between; align-items: center; font-size: 28px; line-height: 40px; color: #64748b; }
.row b { font-weight: 500; color: #1e293b; }
.row-last { height: 81px; padding-bottom: 13px; border-bottom: 0; }
.online { width: 16px; height: 16px; border-radius: 50%; background: #10b981; margin-top: 8px; display: block; }
.scroll-thumb { position: absolute; top: 0; right: 0; width: 12px; height: 1533px; border-radius: 6px; background: #e4e9f2; }
.dock-shadow { position: absolute; left: 443px; bottom: 0; width: 1318px; height: 66px; pointer-events: none; background: linear-gradient(180deg, rgba(70,80,85,0), rgba(70,80,85,.18)); -webkit-mask-image: linear-gradient(90deg, transparent, #000 5%, #000 95%, transparent); mask-image: linear-gradient(90deg, transparent, #000 5%, #000 95%, transparent); }

/* dock */
.desk { flex: 1; display: flex; justify-content: center; align-items: flex-start; padding-top: 3px; }
.dock { width: 1288px; height: 102px; border: 2px solid #41605f; border-radius: 30px; background: #1e4040; display: flex; align-items: flex-start; padding: 13px 0 0 12px; }
.dock-item { width: 66px; height: 66px; margin-right: 20px; flex: none; position: relative; }
.dock-item svg { width: 66px; height: 66px; }
.run::after { content: ""; position: absolute; left: 30px; bottom: -16px; width: 6px; height: 6px; border-radius: 50%; background: #a9bcbc; }
.dock-sep { width: 2px; height: 76px; margin: -2px 28px 0 8px; background: #5a7676; flex: none; }
.dock-sep-2 { margin-left: 10px; margin-right: 29px; }
.dock-pdf { margin-top: -3px; }
.dock-item .dock-pdf { width: 72px; height: 72px; margin-left: -3px; }
.pdf-text { font: 700 24px "Liberation Sans", sans-serif; fill: #fff; }
.dock-trash svg { width: 60px; height: 74px; margin-top: -4px; }
```

FILE: qr.js
```js
(function () {
  var n = 61, seed = 20250624, cells = [], x, y;
  function rnd() { seed = (seed * 1664525 + 1013904223) >>> 0; return (seed >>> 16) & 255; }
  for (y = 0; y < n; y++) {
    cells.push([]);
    for (x = 0; x < n; x++) {
      var v = rnd() < 122 ? 1 : 0;
      if (x > 0 && rnd() < 70) v = cells[y][x - 1];
      cells[y].push(v);
    }
  }
  function finder(ox, oy) {
    for (var j = -1; j < 8; j++) for (var i = -1; i < 8; i++) {
      var px = ox + i, py = oy + j;
      if (px < 0 || py < 0 || px >= n || py >= n) continue;
      var on = i >= 0 && i < 7 && j >= 0 && j < 7 && (i === 0 || i === 6 || j === 0 || j === 6 || (i > 1 && i < 5 && j > 1 && j < 5));
      cells[py][px] = on ? 1 : 0;
    }
  }
  finder(0, 0); finder(54, 0); finder(0, 54);
  for (var k = 8; k < 53; k++) { cells[6][k] = k % 2 === 0 ? 1 : 0; cells[k][6] = k % 2 === 0 ? 1 : 0; }
  [[30, 6], [6, 30], [30, 30], [54, 30], [30, 54], [54, 54]].forEach(function (p) {
    for (var j = -2; j <= 2; j++) for (var i = -2; i <= 2; i++) {
      cells[p[1] + j][p[0] + i] = (Math.abs(i) === 2 || Math.abs(j) === 2 || (i === 0 && j === 0)) ? 1 : 0;
    }
  });
  var d = '';
  for (y = 0; y < n; y++) for (x = 0; x < n; x++) if (cells[y][x]) d += 'M' + x + ' ' + y + 'h1v1h-1z';
  var path = document.createElementNS('http://www.w3.org/2000/svg', 'path');
  path.setAttribute('d', d);
  document.getElementById('qr').appendChild(path);
})();
```
